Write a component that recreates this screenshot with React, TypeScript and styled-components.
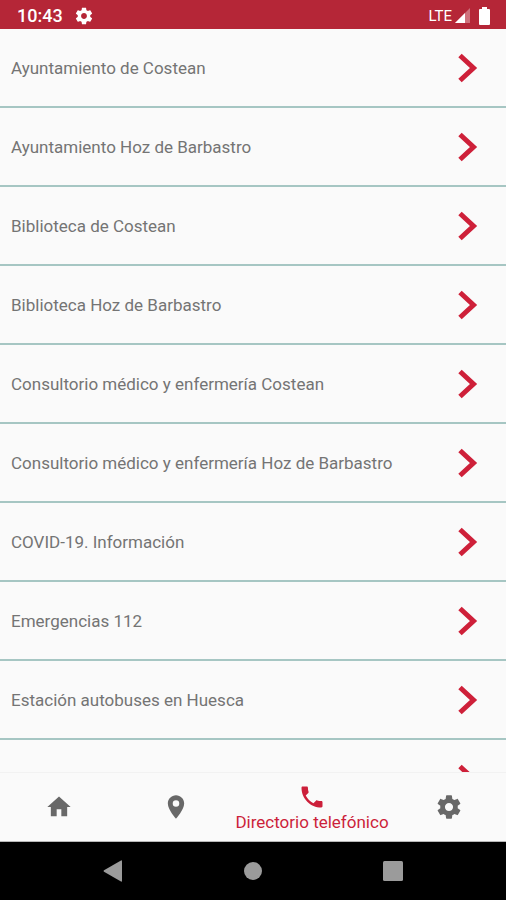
import React from "react";
import styled, { createGlobalStyle } from "styled-components";

const GlobalStyle = createGlobalStyle`
  * { box-sizing: border-box; }
  html, body, #root { height: 100%; }
  body { margin: 0; background: #fafafa; font-family: Roboto, "Noto Sans", sans-serif; }
`;

const Screen = styled.div`
  display: flex;
  flex-direction: column;
  height: 100vh;
  overflow: hidden;
`;

const StatusBar = styled.header`
  display: flex;
  flex: none;
  align-items: center;
  height: 29px;
  padding: 2px 16px 0 17px;
  background: #b52637;
  color: #fff;
`;

const Clock = styled.time`
  margin-right: 11px;
  font-size: 18px;
  line-height: 20px;
  font-weight: 500;
`;

const Network = styled.span`
  margin: 0 3px 0 auto;
  font-size: 15px;
  line-height: 20px;
`;

const Icon = styled.svg<{ $gap?: number }>`
  display: block;
  flex: none;
  fill: currentColor;
  margin-left: ${({ $gap = 0 }) => $gap}px;
`;

const List = styled.ul`
  flex: 1;
  min-height: 0;
  margin: 0;
  padding: 0;
  overflow: hidden;
  list-style: none;
`;

const Row = styled.li`
  height: 79px;
  border-bottom: 2px solid #a6c6c3;
`;

const RowButton = styled.button`
  display: flex;
  align-items: center;
  justify-content: space-between;
  width: 100%;
  height: 100%;
  padding: 0 28px 0 11px;
  border: 0;
  background: #fafafa;
  color: #747474;
  font: 400 17px/24px Roboto, "Noto Sans", sans-serif;
  text-align: left;
`;

const Chevron = styled.svg`
  display: block;
  flex: none;
  fill: none;
  stroke: #ce2039;
  stroke-width: 5;
`;

const Tabs = styled.nav`
  display: flex;
  flex: none;
  justify-content: space-between;
  height: 70px;
  border-top: 1px solid #f2f2f2;
  border-bottom: 1px solid #b8b8b8;
  background: #fafafa;
`;

const Tab = styled.button<{ $active?: boolean }>`
  display: flex;
  flex: ${({ $active }) => ($active ? "0 0 156px" : "0 0 117px")};
  flex-direction: column;
  align-items: center;
  justify-content: center;
  padding: ${({ $active }) => ($active ? "2px 0 0" : "0")};
  border: 0;
  background: none;
  color: ${({ $active }) => ($active ? "#cc1f3a" : "#686868")};
  font: 400 17px/22px Roboto, "Noto Sans", sans-serif;
  white-space: nowrap;
`;

const SystemBar = styled.footer`
  display: flex;
  flex: none;
  align-items: center;
  justify-content: center;
  gap: 112px;
  height: 58px;
  background: #000;
`;

const SystemButton = styled.button`
  display: flex;
  align-items: center;
  justify-content: center;
  width: 28px;
  height: 28px;
  padding: 0;
  border: 0;
  background: none;
  color: #9b9b9b;
`;

const GEAR =
  "M19.43 12.98c.04-.32.07-.64.07-.98s-.03-.66-.07-.98l2.11-1.65c.19-.15.24-.42.12-.64l-2-3.46c-.12-.22-.39-.3-.61-.22l-2.49 1c-.52-.4-1.08-.73-1.69-.98l-.38-2.65C14.46 2.18 14.25 2 14 2h-4c-.25 0-.46.18-.49.42l-.38 2.65c-.61.25-1.17.59-1.69.98l-2.49-1c-.23-.09-.49 0-.61.22l-2 3.46c-.13.22-.07.49.12.64l2.11 1.65c-.04.32-.07.65-.07.98s.03.66.07.98l-2.11 1.65c-.19.15-.24.42-.12.64l2 3.46c.12.22.39.3.61.22l2.49-1c.52.4 1.08.73 1.69.98l.38 2.65c.03.24.24.42.49.42h4c.25 0 .46-.18.49-.42l.38-2.65c.61-.25 1.17-.59 1.69-.98l2.49 1c.23.09.49 0 .61-.22l2-3.46c.12-.22.07-.49-.12-.64l-2.11-1.65zM12 15.5c-1.93 0-3.5-1.57-3.5-3.5s1.57-3.5 3.5-3.5 3.5 1.57 3.5 3.5-1.57 3.5-3.5 3.5z";

const entries = [
  "Ayuntamiento de Costean",
  "Ayuntamiento Hoz de Barbastro",
  "Biblioteca de Costean",
  "Biblioteca Hoz de Barbastro",
  "Consultorio médico y enfermería Costean",
  "Consultorio médico y enfermería Hoz de Barbastro",
  "COVID-19. Información",
  "Emergencias 112",
  "Estación autobuses en Huesca",
  "Estación de autobuses en Barbastro",
];

const tabs = [
  { name: "Inicio", path: "M10 20v-6h4v6h5v-8h3L12 3 2 12h3v8z" },
  {
    name: "Mapa",
    path: "M12 2C8.13 2 5 5.13 5 9c0 5.25 7 13 7 13s7-7.75 7-13c0-3.87-3.13-7-7-7zm0 9.800a2.800 2.800 0 0 1 0-5.600 2.800 2.800 0 0 1 0 5.600z",
  },
  {
    name: "Directorio telefónico",
    active: true,
    path: "M6.62 10.790c1.440 2.830 3.760 5.140 6.590 6.590l2.200-2.200c.27-.27.67-.36 1.020-.24 1.120.37 2.330.57 3.570.57.550 0 1 .45 1 1V20c0 .55-.45 1-1 1C10.610 21 3 13.390 3 4c0-.55.45-1 1-1h3.500c.55 0 1 .45 1 1 0 1.250.2 2.450.57 3.570.11.35.03.74-.25 1.020l-2.200 2.200z",
  },
  { name: "Ajustes", path: GEAR },
];

export default function App() {
  return (
    <>
      <GlobalStyle />
      <Screen>
        <StatusBar>
          <Clock>10:43</Clock>
          <Icon width="20" height="20" viewBox="0 0 24 24" aria-hidden="true">
            <path d={GEAR} />
          </Icon>
          <Network>LTE</Network>
          <Icon width="16" height="15" viewBox="0 0 16 15" aria-hidden="true">
            <path d="M15 0v15H0z" opacity=".35" />
            <path d="M10 5v10H0z" />
          </Icon>
          <Icon $gap={8} width="11" height="18" viewBox="0 0 11 18" aria-hidden="true">
            <path d="M3 0h5v2h2q1 0 1 1v14q0 1-1 1H1q-1 0-1-1V3q0-1 1-1h2z" />
          </Icon>
        </StatusBar>
        <List>
          {entries.map((entry) => (
            <Row key={entry}>
              <RowButton type="button">
                {entry}
                <Chevron width="20" height="30" viewBox="0 0 20 30" aria-hidden="true">
                  <path d="M2 2.500 15.500 15 2 27.500" />
                </Chevron>
              </RowButton>
            </Row>
          ))}
        </List>
        <Tabs aria-label="Secciones">
          {tabs.map(({ name, path, active }) => (
            <Tab
              key={name}
              type="button"
              $active={active}
              aria-label={name}
              aria-current={active ? "page" : undefined}
            >
              <Icon width="28" height="28" viewBox="0 0 24 24" aria-hidden="true">
                <path d={path} />
              </Icon>
              {active && name}
            </Tab>
          ))}
        </Tabs>
        <SystemBar>
          <SystemButton type="button" aria-label="Atrás">
            <Icon width="20" height="22" viewBox="0 0 20 22" aria-hidden="true">
              <path d="M18 .5q1-.5 1 .7v19.600q0 1.200-1 .7L1 11.800q-1-.8 0-1.600z" />
            </Icon>
          </SystemButton>
          <SystemButton type="button" aria-label="Inicio del dispositivo">
            <Icon width="18" height="18" viewBox="0 0 18 18" aria-hidden="true">
              <circle cx="9" cy="9" r="9" />
            </Icon>
          </SystemButton>
          <SystemButton type="button" aria-label="Recientes">
            <Icon width="20" height="20" viewBox="0 0 20 20" aria-hidden="true">
              <rect width="20" height="20" rx="1.500" />
            </Icon>
          </SystemButton>
        </SystemBar>
      </Screen>
    </>
  );
}
